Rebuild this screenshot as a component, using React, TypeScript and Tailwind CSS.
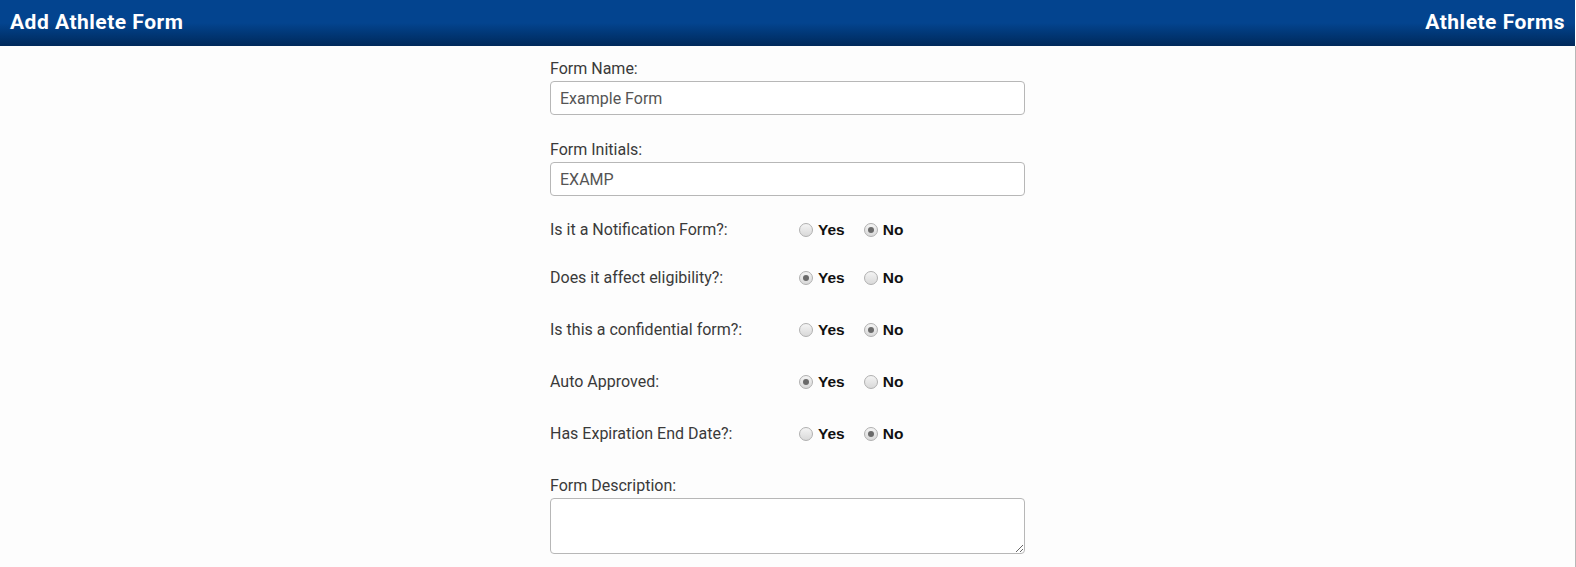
import React from 'react';

type Choice = 'yes' | 'no';

interface RadioRowProps {
  label: string;
  value: Choice;
  className?: string;
}

const Radio: React.FC<{ checked: boolean }> = ({ checked }) => (
  <span className="flex h-[14px] w-[14px] items-center justify-center rounded-full border border-[#b0b0b0] bg-gradient-to-b from-[#f4f4f4] to-[#d9d9d9]">
    {checked && <span className="h-[6px] w-[6px] rounded-full bg-[#6a6a6a]" />}
  </span>
);

const RadioRow: React.FC<RadioRowProps> = ({ label, value, className = '' }) => (
  <div className={`flex h-[20px] items-center ${className}`}>
    <span className="w-[249px] text-[16px] text-[#3a3a3a]">{label}</span>
    <label className="flex items-center gap-[5px]">
      <Radio checked={value === 'yes'} />
      <span className="font-['Liberation_Sans',Arial,sans-serif] text-[15.5px] font-bold text-[#111]">Yes</span>
    </label>
    <label className="ml-[19px] flex items-center gap-[5px]">
      <Radio checked={value === 'no'} />
      <span className="font-['Liberation_Sans',Arial,sans-serif] text-[15.5px] font-bold text-[#111]">No</span>
    </label>
  </div>
);

export default function App() {
  return (
    <div className="min-h-[567px] w-[1576px] bg-[#fdfdfd] font-['Roboto',sans-serif]">
      {/* Title bar */}
      <header className="flex h-[46px] w-[1575px] items-center justify-between bg-gradient-to-b from-[#03448f] from-50% to-[#00295b] px-[10px] text-[21px] font-bold tracking-[0.5px] text-white">
        <span>Add Athlete Form</span>
        <span>Athlete Forms</span>
      </header>

      <div className="h-[521px] w-[1576px] border-r border-[#b8b8b8]">
        <div className="ml-[550px] w-[475px] pt-[13px]">
          <label className="block text-[16px] leading-[20px] text-[#3a3a3a]">Form Name:</label>
          <input
            className="mt-[2px] block h-[34px] w-full rounded-[4px] border border-[#b7b7b7] bg-white px-[9px] text-[16px] text-[#555] outline-none"
            defaultValue="Example Form"
          />

          <label className="mt-[25px] block text-[16px] leading-[20px] text-[#3a3a3a]">Form Initials:</label>
          <input
            className="mt-[2px] block h-[34px] w-full rounded-[4px] border border-[#b7b7b7] bg-white px-[9px] text-[16px] text-[#555] outline-none"
            defaultValue="EXAMP"
          />

          <RadioRow className="mt-[24px]" label="Is it a Notification Form?:" value="no" />
          <RadioRow className="mt-[28px]" label="Does it affect eligibility?:" value="yes" />
          <RadioRow className="mt-[32px]" label="Is this a confidential form?:" value="no" />
          <RadioRow className="mt-[32px]" label="Auto Approved:" value="yes" />
          <RadioRow className="mt-[32px]" label="Has Expiration End Date?:" value="no" />

          <label className="mt-[32px] block text-[16px] leading-[20px] text-[#3a3a3a]">Form Description:</label>
          <textarea className="mt-[2px] block h-[56px] w-full rounded-[4px] border border-[#b7b7b7] bg-white px-[9px] text-[16px] text-[#555] outline-none" />
        </div>
      </div>
    </div>
  );
}
